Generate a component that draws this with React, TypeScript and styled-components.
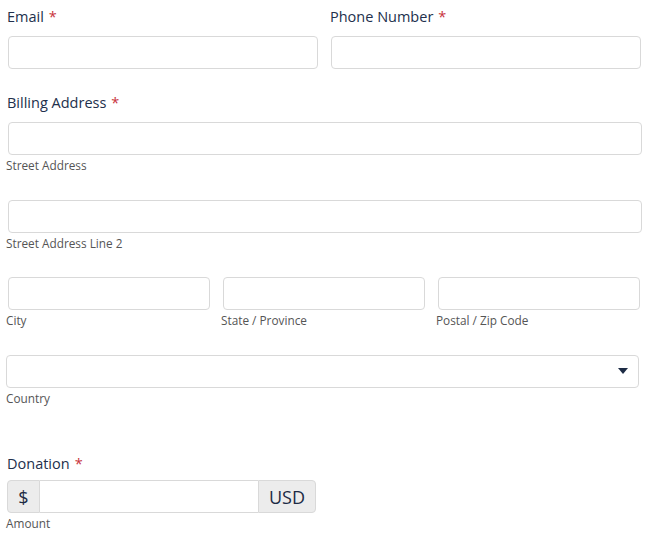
import React from "react";
import styled, { createGlobalStyle } from "styled-components";

const Global = createGlobalStyle`
  html, body { margin: 0; padding: 0; background: #fff; }
  body { font-family: "Open Sans", "DejaVu Sans", sans-serif; color: #1d2b45; }
  * { box-sizing: border-box; }
`;

const Form = styled.form`
  padding: 4px 0 0 6px;
  width: 642px;
  display: flex;
  flex-direction: column;
`;

const Field = styled.div<{ $mb: number }>`
  display: flex;
  flex-direction: column;
  margin-bottom: ${(p) => p.$mb}px;
`;

const Label = styled.label<{ $gap?: number }>`
  font-size: 14.5px;
  line-height: 22px;
  padding: 2px 0 0 1px;
  margin-bottom: ${(p) => p.$gap ?? 8}px;
  color: #22304c;
`;

const Req = styled.span`
  color: #c8333b;
  margin-left: 5px;
`;

const Row = styled.div<{ $cols: string }>`
  display: grid;
  grid-template-columns: ${(p) => p.$cols};
  column-gap: 11px;
`;

const Input = styled.input`
  display: block;
  margin: 0 0 0 2px;
  width: calc(100% - 2px);
  height: 33px;
  border: 1px solid #d9d9d9;
  border-radius: 4px;
  background: #fff;
  outline: none;
  font: inherit;
`;

const Sub = styled.span`
  font-size: 11.8px;
  line-height: 16px;
  margin-top: 2px;
  color: #555;
`;

const SelectWrap = styled.div`
  position: relative;
  width: 633px;
  height: 33px;
  border: 1px solid #d9d9d9;
  border-radius: 4px;
`;

const Caret = styled.svg`
  position: absolute;
  right: 10px;
  top: 12px;
`;

const Group = styled.div`
  display: flex;
  margin-left: 1px;
  width: 309px;
  height: 33px;
`;

const Addon = styled.span<{ $side: "l" | "r" }>`
  display: flex;
  align-items: center;
  justify-content: center;
  background: #ececec;
  border: 1px solid #d9d9d9;
  border-radius: ${(p) => (p.$side === "l" ? "4px 0 0 4px" : "0 4px 4px 0")};
  font-size: 18px;
  color: #1d2b45;
  width: ${(p) => (p.$side === "l" ? "33px" : "58px")};
`;

const GroupInput = styled.input`
  flex: 1;
  min-width: 0;
  height: 33px;
  border: 1px solid #d9d9d9;
  border-left: none;
  border-right: none;
  margin: 0;
  outline: none;
  font: inherit;
`;

export default function App() {
  return (
    <>
      <Global />
      <Form>
        <Row $cols="312px 312px">
          <Field $mb={21}>
            <Label>
              Email<Req>*</Req>
            </Label>
            <Input type="text" />
          </Field>
          <Field $mb={21}>
            <Label>
              Phone Number<Req>*</Req>
            </Label>
            <Input type="text" />
          </Field>
        </Row>
        <Field $mb={27}>
          <Label>
            Billing Address<Req>*</Req>
          </Label>
          <Input type="text" />
          <Sub>Street Address</Sub>
        </Field>
        <Field $mb={26}>
          <Input type="text" />
          <Sub>Street Address Line 2</Sub>
        </Field>
        <Row $cols="204px 204px 204px">
          <Field $mb={27}>
            <Input type="text" />
            <Sub>City</Sub>
          </Field>
          <Field $mb={27}>
            <Input type="text" />
            <Sub>State / Province</Sub>
          </Field>
          <Field $mb={27}>
            <Input type="text" />
            <Sub>Postal / Zip Code</Sub>
          </Field>
        </Row>
        <Field $mb={45}>
          <SelectWrap>
            <Caret width="10" height="6" viewBox="0 0 10 6">
              <path d="M0 0 L10 0 L5 6 Z" fill="#1d2b45" />
            </Caret>
          </SelectWrap>
          <Sub>Country</Sub>
        </Field>
        <Field $mb={0}>
          <Label $gap={5}>
            Donation<Req>*</Req>
          </Label>
          <Group>
            <Addon $side="l">$</Addon>
            <GroupInput type="text" />
            <Addon $side="r">USD</Addon>
          </Group>
          <Sub>Amount</Sub>
        </Field>
      </Form>
    </>
  );
}
